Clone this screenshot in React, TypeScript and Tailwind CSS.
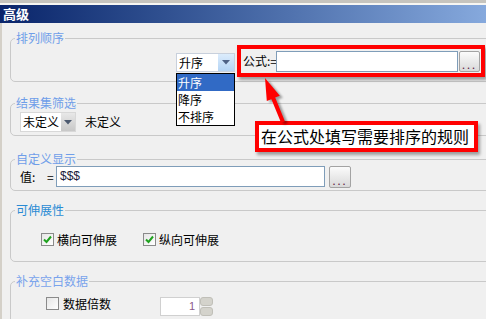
import React from "react";

const legendBase = "ml-[4px] px-[1px] text-[12px] leading-[14px]";

function DotsButton({ className }: { className: string }) {
    return (
        <div className={"shrink-0 flex items-end justify-center border border-[#a3a3a3] rounded-[2px] bg-linear-to-b from-[#fbfbfb] to-[#d9d9d9] text-[#602040] text-[11px] leading-[14px] tracking-[2px] " + className}>
            ...
        </div>
    );
}

function Checkbox({ checked }: { checked: boolean }) {
    return (
        <div className="w-[13px] h-[13px] border border-[#8a8a8a] bg-linear-to-br from-[#e6e6e6] to-[#ffffff] flex items-center justify-center">
            {checked && (
                <svg width="9" height="9" viewBox="0 0 9 9">
                    <path d="M1 4.5 L3.5 7 L8 1.5" stroke="#1fa21f" strokeWidth="2" fill="none" />
                </svg>
            )}
        </div>
    );
}

function DownTriangle({ color }: { color: string }) {
    return (
        <svg width="8" height="5" viewBox="0 0 8 5">
            <polygon points="0,0 8,0 4,4.5" fill={color} />
        </svg>
    );
}

export default function App() {
    return (
        <div className="relative w-[486px] h-[319px] overflow-hidden bg-[#f0f0f0] text-black font-['Noto_Sans_CJK_SC','Noto_Sans',sans-serif] text-[12px] leading-[14px]">
            <div className="h-[3px] bg-[#c6c4be]" />
            <div className="h-[2px] bg-[#f7f6f2]" />
            <div className="h-[18px] bg-linear-to-r from-[#0a246a] to-[#86a9dd] pl-[3px] text-white font-bold text-[13px] leading-[18px]">
                高级
            </div>

            <div className="h-[296px] border-l-2 border-[#d4d0c8] pl-[8px] pt-[8px]">
                {/* 排列顺序 */}
                <fieldset className="w-[520px] border border-[#c9c9c9] rounded-[5px]">
                    <legend className={legendBase + " text-[#6f9ee9]"}>排列顺序</legend>
                    <div className="flex items-start h-[36px]">
                        <div className="relative shrink-0 ml-[165px] mt-[8px] w-[59px] h-[19px] border border-[#c8d0dc] bg-white flex">
                            <span className="pl-[2px] leading-[17px] flex-1">升序</span>
                            <div className="w-[16px] h-[17px] bg-linear-to-b from-[#dcecfc] to-[#b4d4f4] flex items-center justify-center">
                                <DownTriangle color="#4d6185" />
                            </div>
                            <div className="absolute left-[-1px] top-[19px] w-[59px] border border-black bg-white z-10">
                                <div className="h-[17px] leading-[17px] pl-[1px] bg-[#316ac5] text-white">升序</div>
                                <div className="h-[17px] leading-[17px] pl-[1px]">降序</div>
                                <div className="h-[17px] leading-[17px] pl-[1px]">不排序</div>
                            </div>
                        </div>
                        <div className="shrink-0 ml-[2px] w-[248px] h-[32px] border-4 border-[#ff0000] flex items-center shadow-[2px_3px_3px_rgba(0,0,0,0.35)]">
                            <span className="shrink-0 w-[35px] pl-[2px] whitespace-nowrap">公式:=</span>
                            <div className="shrink-0 w-[182px] h-[21px] border border-[#7f9db9] bg-white" />
                            <DotsButton className="ml-[1px] w-[21px] h-[21px]" />
                        </div>
                    </div>
                </fieldset>

                {/* 结果集筛选 */}
                <fieldset className="mt-[14px] w-[520px] border border-[#c9c9c9] rounded-[5px]">
                    <legend className={legendBase + " text-[#6f9ee9]"}>结果集筛选</legend>
                    <div className="flex items-center pt-[2px] pb-[3px]">
                        <div className="ml-[9px] w-[56px] h-[20px] border border-[#d8d8d8] bg-white flex">
                            <span className="pl-[2px] leading-[18px] flex-1">未定义</span>
                            <div className="w-[14px] h-[18px] bg-linear-to-b from-[#e8e8e8] to-[#c8c8c8] flex items-center justify-center">
                                <DownTriangle color="#4d5a70" />
                            </div>
                        </div>
                        <span className="ml-[9px]">未定义</span>
                    </div>
                </fieldset>

                {/* 自定义显示 */}
                <fieldset className="mt-[16px] w-[520px] border border-[#c9c9c9] rounded-[5px]">
                    <legend className={legendBase + " text-[#6f9ee9]"}>自定义显示</legend>
                    <div className="flex items-start pb-[2px]">
                        <span className="ml-[9px] w-[27px] leading-[21px]">值:</span>
                        <span className="w-[9px] leading-[21px]">=</span>
                        <div className="w-[269px] h-[21px] border border-[#7f9db9] bg-white pl-[3px] font-['Liberation_Sans',sans-serif] text-[12px] leading-[19px] text-[#1a1a3a]">
                            $$$
                        </div>
                        <DotsButton className="ml-[4px] w-[22px] h-[22px]" />
                    </div>
                </fieldset>

                {/* 可伸展性 */}
                <fieldset className="mt-[12px] w-[520px] border border-[#c9c9c9] rounded-[5px]">
                    <legend className={legendBase + " text-[#2a8bd4]"}>可伸展性</legend>
                    <div className="flex items-center pt-[16px] pb-[15px] h-[44px]">
                        <div className="ml-[30px]">
                            <Checkbox checked />
                        </div>
                        <span className="ml-[3px]">横向可伸展</span>
                        <div className="ml-[26px]">
                            <Checkbox checked />
                        </div>
                        <span className="ml-[3px]">纵向可伸展</span>
                    </div>
                </fieldset>

                {/* 补充空白数据 */}
                <fieldset className="mt-[12px] w-[520px] h-[60px] border border-[#c9c9c9] rounded-[5px]">
                    <legend className={legendBase + " text-[#79a3ec]"}>补充空白数据</legend>
                    <div className="flex items-start pt-[9px]">
                        <div className="ml-[35px]">
                            <Checkbox checked={false} />
                        </div>
                        <span className="ml-[4px] leading-[14px]">数据倍数</span>
                        <div className="ml-[49px] flex">
                            <div className="w-[40px] h-[19px] border border-[#d0d0d0] bg-white text-right pr-[4px] font-['Liberation_Sans',sans-serif] text-[11px] leading-[17px] text-[#8a5a8a]">
                                1
                            </div>
                            <div className="w-[13px] h-[19px] flex flex-col gap-[1px]">
                                <div className="flex-1 rounded-[3px] bg-[#d4d3cc] border border-[#c0bfb8]" />
                                <div className="flex-1 rounded-[3px] bg-[#d4d3cc] border border-[#c0bfb8]" />
                            </div>
                        </div>
                    </div>
                </fieldset>
            </div>

            {/* annotation: tooltip */}
            <div className="absolute left-[255px] top-[121px] w-[223px] h-[31px] border-4 border-[#ff0000] bg-white pl-[2px] text-[16px] leading-[23px] whitespace-nowrap shadow-[2px_3px_3px_rgba(0,0,0,0.35)] z-20">
                在公式处填写需要排序的规则
            </div>

            {/* annotation: arrow */}
            <svg className="absolute left-0 top-0 pointer-events-none z-30" width="486" height="319" viewBox="0 0 486 319">
                <defs>
                    <filter id="blur" x="-20%" y="-20%" width="140%" height="140%">
                        <feGaussianBlur stdDeviation="1" />
                    </filter>
                </defs>
                <polygon
                    transform="translate(3,2)"
                    filter="url(#blur)"
                    fill="rgba(0,0,0,0.35)"
                    points="265,78 279.8,95.7 275.2,97.6 284.9,121.2 281.1,122.8 271.4,99.2 266.8,101.1"
                />
                <polygon
                    fill="#ff0000"
                    points="265,78 279.8,95.7 275.2,97.6 284.9,121.2 281.1,122.8 271.4,99.2 266.8,101.1"
                />
            </svg>
        </div>
    );
}
